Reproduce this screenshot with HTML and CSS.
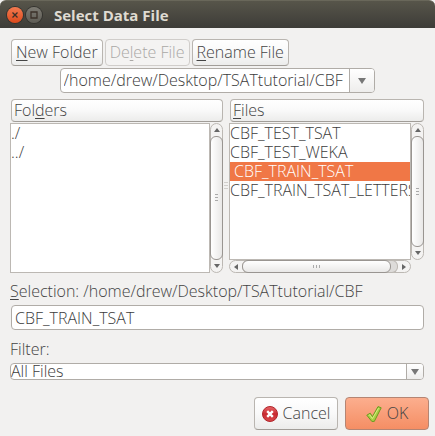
FILE: index.html
```html
<!DOCTYPE html>
<html lang="en">
<head>
<meta charset="utf-8">
<title>Select Data File</title>
<link rel="stylesheet" href="styles.css">
</head>
<body>
<header class="titlebar">
  <button class="win-btn win-close" type="button" aria-label="Close"><svg viewBox="0 0 16 16"><path d="M5.5 5.5l5 5M10.5 5.5l-5 5"/></svg></button>
  <button class="win-btn win-max" type="button" aria-label="Maximize"><svg viewBox="0 0 16 16"><path d="M5 5h6v6h-6z"/></svg></button>
  <h1 class="title">Select Data File</h1>
</header>
<form class="dialog">
  <div class="toolbar">
    <button class="btn" type="button"><u>N</u>ew Folder</button>
    <button class="btn" type="button" disabled>De<u>l</u>ete File</button>
    <button class="btn" type="button"><u>R</u>ename File</button>
  </div>
  <div class="combo combo-path">
    <select aria-label="Directory"><option>/home/drew/Desktop/TSATtutorial/CBF</option></select>
    <span class="combo-arrow"><svg viewBox="0 0 8 6"><path d="M0 0h8L4 6z"/></svg></span>
  </div>
  <div class="panes">
    <section class="pane">
      <button class="btn head" type="button">Fol<u>d</u>ers</button>
      <div class="scroller">
        <ul class="list" role="listbox" aria-label="Folders">
          <li role="option">./</li>
          <li role="option">../</li>
        </ul>
        <div class="bar bar-v">
          <span class="step"><svg viewBox="0 0 6 4"><path d="M0 4h6L3 0z"/></svg></span>
          <span class="thumb"><i class="grip"></i></span>
          <span class="step"><svg viewBox="0 0 6 4"><path d="M0 0h6L3 4z"/></svg></span>
        </div>
      </div>
    </section>
    <div class="splitter"><i class="grip"></i></div>
    <section class="pane">
      <button class="btn head" type="button"><u>F</u>iles</button>
      <div class="scroller with-h">
        <ul class="list" role="listbox" aria-label="Files">
          <li role="option">CBF_TEST_TSAT</li>
          <li role="option">CBF_TEST_WEKA</li>
          <li role="option" class="selected" aria-selected="true">CBF_TRAIN_TSAT</li>
          <li role="option">CBF_TRAIN_TSAT_LETTERS</li>
        </ul>
        <div class="bar bar-v">
          <span class="step"><svg viewBox="0 0 6 4"><path d="M0 4h6L3 0z"/></svg></span>
          <span class="thumb"><i class="grip"></i></span>
          <span class="step"><svg viewBox="0 0 6 4"><path d="M0 0h6L3 4z"/></svg></span>
        </div>
        <div class="bar bar-h">
          <span class="step"><svg viewBox="0 0 4 6"><path d="M4 0v6L0 3z"/></svg></span>
          <span class="track"><span class="thumb"><i class="grip"></i></span></span>
          <span class="step"><svg viewBox="0 0 4 6"><path d="M0 0v6l4-3z"/></svg></span>
        </div>
      </div>
    </section>
  </div>
  <label class="label" for="selection"><u>S</u>election: /home/drew/Desktop/TSATtutorial/CBF</label>
  <input class="field" id="selection" type="text" value="CBF_TRAIN_TSAT">
  <label class="label label-filter" for="filter">Filter:</label>
  <div class="combo combo-filter">
    <select id="filter"><option>All Files</option></select>
    <span class="combo-arrow"><svg viewBox="0 0 8 6"><path d="M0 0h8L4 6z"/></svg></span>
  </div>
  <div class="actions">
    <button class="btn action" type="button">
      <svg viewBox="0 0 16 16"><defs><linearGradient id="red" x2="0" y2="1"><stop stop-color="#e8686a"/><stop offset=".5" stop-color="#c92a30"/><stop offset="1" stop-color="#d94a4c"/></linearGradient></defs><circle cx="8" cy="8" r="7.5" fill="url(#red)" stroke="#b0252b"/><path d="M5.2 5.2l5.6 5.6M10.8 5.2l-5.6 5.6" stroke="#fff" stroke-width="2.4"/></svg>
      Cancel
    </button>
    <button class="btn action ok" type="submit">
      <svg viewBox="0 0 16 16"><path d="M.8 9.200l3.400-2 2.300 3.400L12 .6l3.200 1.200L8.300 15.400H5.800z" fill="#a9cf45" stroke="#6c9a20" stroke-linejoin="round"/><path d="M2.800 9.400l1-.6 2.600 3.800L12.500 2.200" fill="none" stroke="#d8ee84"/></svg>
      OK
    </button>
  </div>
</form>
</body>
</html>
```
FILE: styles.css
```css
* { box-sizing: border-box; }
body {
  margin: 0;
  background: #f2f1f0;
  color: #444;
  font: 300 16px/19px "Open Sans", "Noto Sans", sans-serif;
}
button, input, select { font: inherit; color: inherit; }
u { text-underline-offset: 2px; text-decoration-thickness: 1px; }

.titlebar {
  display: flex;
  align-items: center;
  gap: 3px;
  height: 28px;
  padding: 0 7px;
  border-radius: 6px 6px 0 0;
  border-top: 1px solid #69675a;
  background: linear-gradient(#57554a, #3d3c38);
}
.win-btn {
  width: 16px;
  height: 16px;
  padding: 0;
  border: 0;
  border-radius: 50%;
  box-shadow: 0 0 0 1px #34332f;
}
.win-btn svg { display: block; fill: none; stroke: #3b3029; stroke-width: 1.3; }
.win-close { background: linear-gradient(#f37a50, #dd4a1c); }
.win-max { background: linear-gradient(#7d7b73, #5e5c55); }
.title {
  margin: 0 0 0 9px;
  color: #dfdbd2;
  font: 700 15px/20px "Open Sans", "Noto Sans", sans-serif;
}

.dialog { display: flex; flex-direction: column; padding: 11px 6px 6px 10px; }
.toolbar { display: flex; gap: 2px; padding-left: 1px; }
.btn {
  height: 27px;
  padding: 0 4px;
  border: 1px solid #b9b5b0;
  border-bottom-color: #a19d98;
  border-radius: 4px;
  background: linear-gradient(#fff, #f9f9f9 50%, #ececeb);
  white-space: nowrap;
}
.btn:disabled { color: #aaa8a6; border-color: #d0cdca; background: #f4f3f2; }

.combo {
  position: relative;
  display: flex;
  border: 1px solid #b0aca7;
  border-radius: 4px;
  background: #fff;
  color: #3c3c3c;
  overflow: hidden;
}
.combo select {
  flex: 1;
  min-width: 0;
  padding: 0;
  border: 0;
  background: none;
  appearance: none;
}
.combo-arrow {
  position: absolute;
  inset: 0 0 0 auto;
  display: flex;
  align-items: center;
  justify-content: center;
  border-left: 1px solid #b0aca7;
  background: linear-gradient(#fff, #eeedec);
  pointer-events: none;
}
.combo-arrow svg { width: 8px; height: 6px; fill: #777; }
.combo-path { align-self: center; width: 315px; height: 25px; margin: 2px 5px 6px 0; }
.combo-path select { padding-left: 3px; }
.combo-path .combo-arrow { width: 25px; }
.combo-filter { height: 17px; margin-right: 5px; }
.combo-filter select { line-height: 15px; }
.combo-filter .combo-arrow { width: 17px; }

.panes {
  display: grid;
  grid-template-columns: 213fr 6px 195fr;
  margin-right: 5px;
}
.pane { display: flex; flex-direction: column; min-width: 0; }
.head { height: 23px; margin: 0 0 1px 1px; padding: 0 2px; text-align: left; line-height: 19px; }
.scroller { display: grid; grid-template-columns: minmax(0, 1fr) 13px; height: 150px; }
.with-h { grid-template-rows: 1fr 13px; }
.list {
  margin: 0;
  padding: 0;
  border: 1px solid #bcb8b3;
  background: #fff;
  color: #3c3c3c;
  list-style: none;
  overflow: hidden;
  white-space: nowrap;
}
.list .selected { padding-left: 4px; background: #f07746; color: #fff; }

.bar { display: flex; border: 1px solid #bcb8b3; border-radius: 7px; background: #f4f3f2; }
.bar-v { flex-direction: column; }
.step { display: flex; flex: none; align-items: center; justify-content: center; width: 12px; height: 12px; }
.bar-v .step { width: 11px; }
.bar-h .step { height: 11px; }
.step svg { width: 6px; height: 4px; fill: #666; }
.bar-h .step svg { width: 4px; height: 6px; }
.thumb {
  display: flex;
  flex: 1;
  align-items: center;
  justify-content: center;
  border: 1px solid #999591;
  border-radius: 6px;
  background: linear-gradient(90deg, #fff, #e9e8e7);
}
.bar-v .thumb { margin: 0 -1px; }
.track { display: flex; flex: 1; margin: -1px 0; padding-right: 6px; border: 1px solid #bcb8b3; border-width: 1px 1px 1px 0; border-radius: 6px; background: #dddbd9; }
.bar-h .thumb { margin: -1px 0; background: linear-gradient(#fff, #e9e8e7); }
.grip { width: 3px; height: 8px; background: repeating-linear-gradient(#aaa 0 1px, transparent 1px 3px); }
.bar-h .grip { width: 8px; height: 3px; background: repeating-linear-gradient(90deg, #aaa 0 1px, transparent 1px 3px); }
.splitter { display: flex; align-items: center; justify-content: center; }
.splitter .grip { width: 4px; background: repeating-linear-gradient(#d0cecb 0 1px, transparent 1px 3px); }

.label { margin: 9px 0 4px; }
.label-filter { margin-top: 10px; }
.field {
  height: 25px;
  margin: 0 5px 0 1px;
  padding: 0 3px;
  border: 1px solid #b0aca7;
  border-radius: 4px;
  background: #fff;
  color: #3c3c3c;
}

.actions { display: flex; justify-content: flex-end; gap: 7px; margin-top: 17px; }
.action {
  display: flex;
  align-items: center;
  justify-content: center;
  gap: 5px;
  width: 84px;
  height: 33px;
}
.action svg { flex: none; width: 16px; height: 16px; }
.ok { border-color: #b58573; background: linear-gradient(#fcae8e, #f58e64); }
```
